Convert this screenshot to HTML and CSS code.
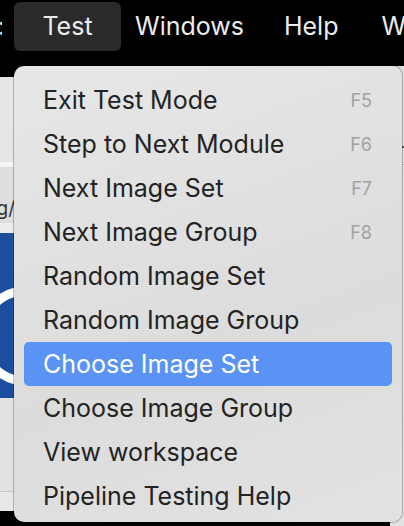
FILE: index.html
```html
<!DOCTYPE html>
<html>
<head>
<meta charset="utf-8">
<link rel="stylesheet" href="styles.css">
</head>
<body>
<div class="screen">
  <div class="menubar">
    <span class="mb-item mb-cut">:</span>
    <span class="mb-item mb-active">Test</span>
    <span class="mb-item">Windows</span>
    <span class="mb-item">Help</span>
    <span class="mb-item">W</span>
  </div>
  <div class="window">
    <div class="left">
      <div class="l1"></div>
      <div class="l2"></div>
      <div class="l3"><span class="frag">g/</span></div>
      <div class="l4">
        <svg width="14" height="163" viewBox="0 0 14 163"><path d="M26 58 A44 44 0 0 0 26 148" fill="none" stroke="#fff" stroke-width="9"/><path d="M26 64 A38 38 0 0 0 26 142" fill="none" stroke="#1d4d9d" stroke-width="2"/></svg>
      </div>
      <div class="l5"></div>
    </div>
    <div class="right">
      <div class="r1"></div>
    </div>
  </div>
  <div class="menu">
    <div class="item"><span>Exit Test Mode</span><span class="key">F5</span></div>
    <div class="item"><span>Step to Next Module</span><span class="key">F6</span></div>
    <div class="item"><span>Next Image Set</span><span class="key">F7</span></div>
    <div class="item"><span>Next Image Group</span><span class="key">F8</span></div>
    <div class="item"><span>Random Image Set</span></div>
    <div class="item"><span>Random Image Group</span></div>
    <div class="item selected"><span>Choose Image Set</span></div>
    <div class="item"><span>Choose Image Group</span></div>
    <div class="item"><span>View workspace</span></div>
    <div class="item"><span>Pipeline Testing Help</span></div>
  </div>
</div>
</body>
</html>
```

FILE: styles.css
```css
html, body {
  margin: 0;
  padding: 0;
  background: #000;
}
.screen {
  position: relative;
  width: 404px;
  height: 526px;
  overflow: hidden;
  font-family: Inter, "Noto Sans", sans-serif;
  background: #000;
}
.menubar {
  height: 56px;
  display: flex;
  align-items: flex-start;
  color: #ececec;
  font-size: 25px;
  padding-top: 2px;
  box-sizing: border-box;
  overflow: hidden;
}
.mb-item {
  flex-shrink: 0;
  padding: 0 10px;
  line-height: 48px;
  height: 49px;
  white-space: nowrap;
}
.mb-cut {
  width: 4px;
  padding: 0;
  margin-left: -2px;
  margin-right: 12px;
  overflow: hidden;
}
.mb-active {
  background: #2a2a2a;
  border-radius: 6px;
  width: 107px;
  box-sizing: border-box;
  padding: 0;
  text-align: center;
  margin-right: 4px;
}
.mb-active + .mb-item { padding-left: 10px; padding-right: 20px; }
.mb-active + .mb-item + .mb-item { padding-left: 20px; padding-right: 33px; }
.window {
  height: 470px;
  display: flex;
  justify-content: space-between;
}
.left {
  width: 14px;
  display: flex;
  flex-direction: column;
}
.l1 {
  height: 21px;
  background: #000;
}
.l2 {
  height: 90px;
  background: linear-gradient(#e6e6e6 0 85px, #f6f6f6 85px);
}
.l3 {
  height: 66px;
  background: linear-gradient(#dedede 0 56px, #ececec 56px);
  display: flex;
  justify-content: flex-end;
  align-items: flex-start;
  overflow: hidden;
}
.frag {
  font-size: 19px;
  line-height: 1;
  color: #333;
  margin-top: 32px;
  margin-right: -1px;
}
.l4 {
  height: 165px;
  background: #1d4d9d;
}
.l4 svg { display: block; }
.l5 {
  flex: 1;
  background: linear-gradient(#e2e2e2 0 93px, #c8c8c8 93px 94px, #e8e8e8 94px 113px, #000 113px);
}
.right {
  width: 14px;
  background: linear-gradient(#dedede 0 80px, #555 80px 82px, #e0e0e0 82px 98px, #bbb 98px 99px, #e2e2e2 99px);
  margin-top: 10px;
}
.menu {
  position: absolute;
  left: 14px;
  top: 66px;
  width: 388px;
  height: 456px;
  box-sizing: border-box;
  background: linear-gradient(160deg, #e6e7e6, #dcdcdc 60%, #e2e2e2);
  border-radius: 10px;
  padding: 12px 10px 0 10px;
  box-shadow: 0 0 0 1px rgba(0,0,0,0.25);
}
.item {
  height: 44px;
  display: flex;
  justify-content: space-between;
  align-items: center;
  padding: 0 20px 0 19px;
  font-size: 25px;
  color: #232323;
  border-radius: 5px;
}
.item .key {
  font-size: 18px;
  color: #a2a2a2;
}
.selected {
  background: #5a93f4;
  color: #fff;
}
```
